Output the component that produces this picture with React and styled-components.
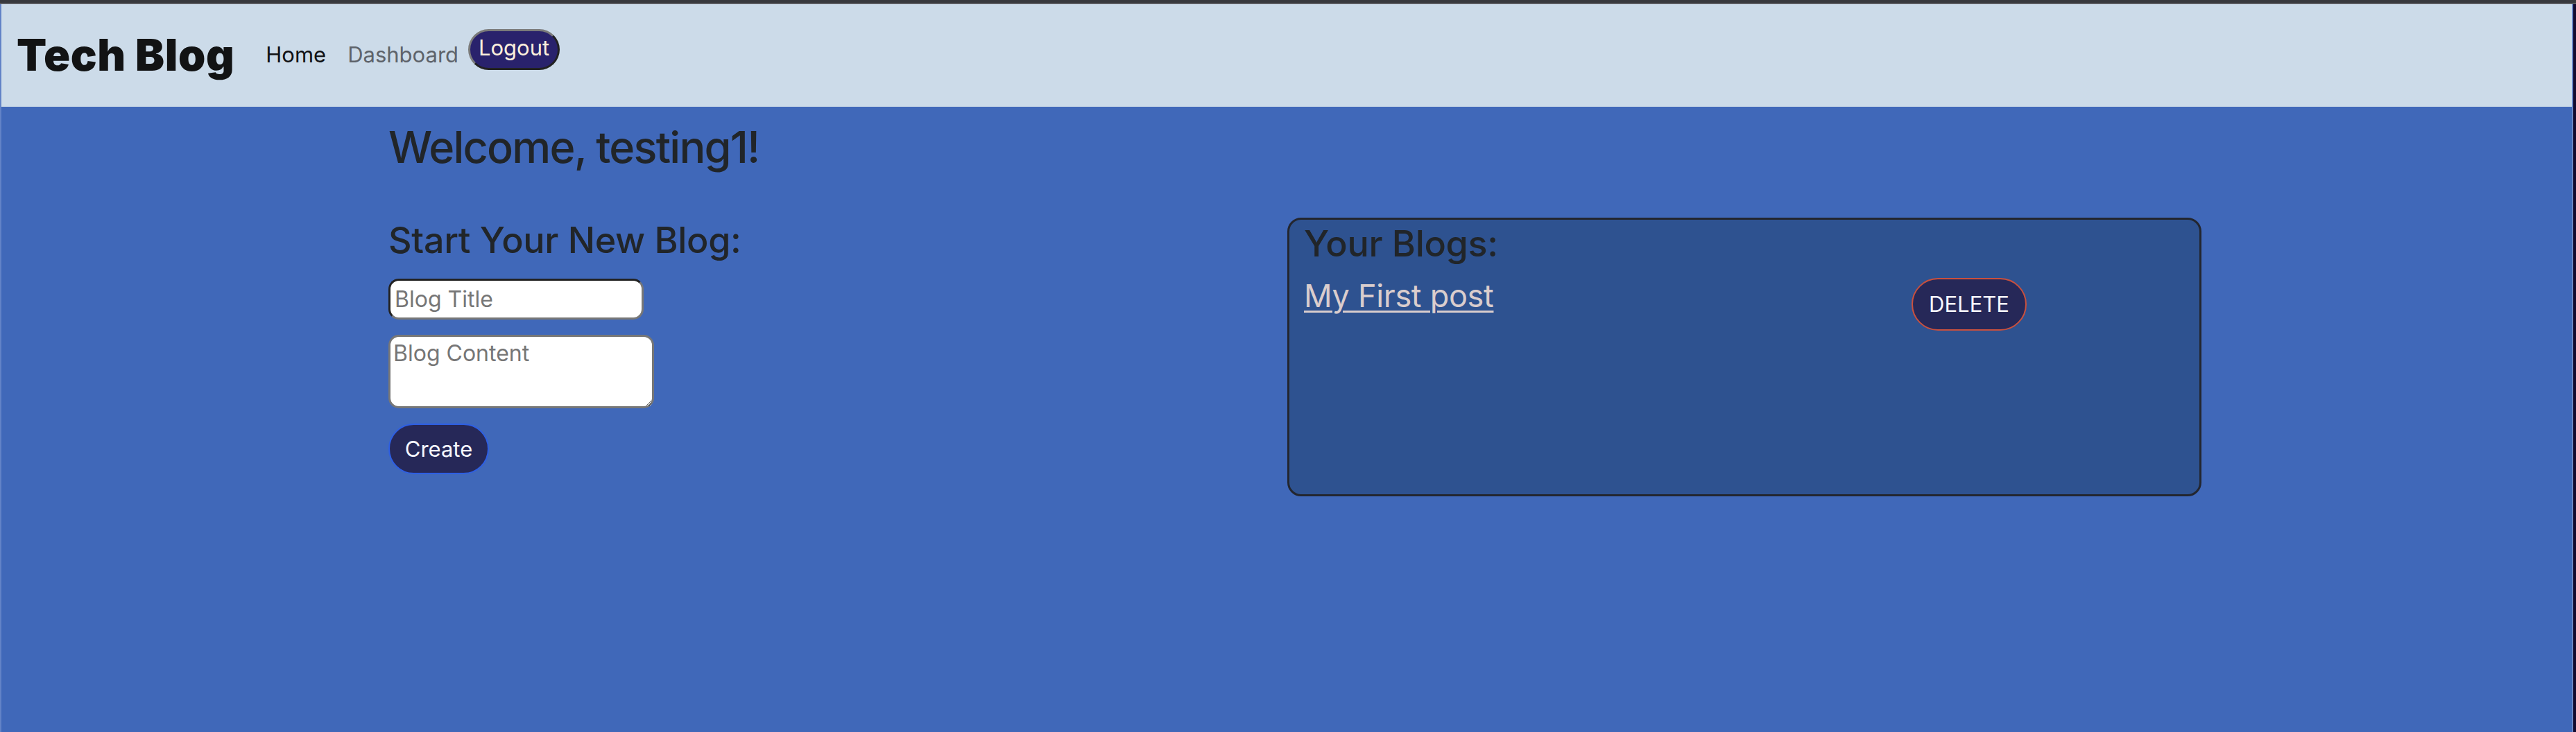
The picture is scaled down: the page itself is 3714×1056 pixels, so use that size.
import React from "react";
import styled, { createGlobalStyle } from "styled-components";

const Global = createGlobalStyle`
  html, body { margin: 0; padding: 0; }
  body {
    background: #4068b9;
    font-family: Inter, "Noto Sans", "Liberation Sans", sans-serif;
    color: #212529;
  }
  * { box-sizing: border-box; }
`;

const Window = styled.div`
  display: flex;
  flex-direction: column;
  width: 3714px;
  height: 1056px;
  overflow: hidden;
`;

const TopStrip = styled.div`
  height: 6px;
  background: #38393d;
  border-bottom: 2px solid #5b5c60;
  flex: none;
`;

const Body = styled.div`
  flex: 1;
  display: flex;
`;

const Viewport = styled.div`
  flex: 1;
  display: flex;
  flex-direction: column;
  background: #4068b9;
  border-right: 2px solid #6a86c6;
  border-left: 2px solid #6283c7;
`;

const Edge = styled.div`
  width: 4px;
  background: #120a30;
  flex: none;
`;

const Header = styled.header`
  height: 148px;
  background: #ccdbe9;
  display: flex;
  align-items: flex-start;
  padding-left: 22px;
  flex: none;
`;

const Brand = styled.div`
  font-family: Inter, "Liberation Sans", sans-serif;
  font-weight: 900;
  font-size: 63px;
  line-height: 1;
  letter-spacing: 0.6px;
  color: #121314;
  margin-top: 42px;
  margin-right: 45px;
`;

const NavLink = styled.a`
  font-size: 31px;
  line-height: 36px;
  margin-top: 55px;
  margin-right: ${(p) => p.$gap}px;
  color: ${(p) => (p.$active ? "#111214" : "#5e636a")};
  text-decoration: none;
`;

const LogoutButton = styled.button`
  margin-top: 36px;
  width: 132px;
  height: 59px;
  border-radius: 30px;
  border: 3px solid;
  border-color: #7a7a7a #222 #222 #7a7a7a;
  background: #29226c;
  color: #fcefdc;
  font-family: Inter, "Liberation Sans", sans-serif;
  font-size: 31px;
  padding: 0 0 6px;
`;

const Main = styled.main`
  flex: 1;
  padding-left: 558px;
  padding-top: 21px;
`;

const Title = styled.h1`
  margin: 0;
  font-size: 63px;
  font-weight: 500;
  line-height: 1.2;
  letter-spacing: -1.8px;
`;

const Columns = styled.div`
  display: grid;
  grid-template-columns: 1296px 1318px;
  align-items: start;
  margin-top: 65px;
`;

const Form = styled.form`
  display: flex;
  flex-direction: column;
  align-items: flex-start;
  gap: 22px;
  margin-top: 2px;
`;

const Heading = styled.h2`
  margin: 0;
  font-size: 52px;
  font-weight: 500;
  line-height: 1.2;
  letter-spacing: -0.3px;
`;

const TitleInput = styled.input`
  width: 368px;
  height: 59px;
  border-radius: 15px;
  border: 3px solid;
  border-color: #222 #777 #777 #222;
  background: #fff;
  padding: 0 6px;
  font-family: Inter, "Liberation Sans", sans-serif;
  font-size: 32px;
  &::placeholder { color: #767676; }
`;

const ContentInput = styled.textarea`
  width: 383px;
  height: 106px;
  border-radius: 15px;
  border: 3px solid #777;
  background: #fff;
  padding: 4px 4px;
  font-family: Inter, "Liberation Sans", sans-serif;
  font-size: 32px;
  line-height: 1.25;
  resize: both;
  &::placeholder { color: #767676; }
`;

const PillButton = styled.button`
  width: ${(p) => p.$w}px;
  height: ${(p) => p.$h}px;
  border-radius: 40px;
  border: 2px solid ${(p) => p.$border};
  background: #262858;
  color: #f6f7ff;
  font-family: Inter, "Liberation Sans", sans-serif;
  font-size: 31px;
  padding: 0;
`;

const Card = styled.section`
  height: 402px;
  border: 3px solid #23262f;
  border-radius: 20px;
  background: #2e5290;
  padding: 4px 21px;
  margin-top: -2px;
`;

const BlogRow = styled.div`
  display: grid;
  grid-template-columns: 876px auto;
  align-items: start;
  margin-top: 17px;
`;

const BlogLink = styled.a`
  font-size: 45px;
  line-height: 1.2;
  color: #dacdcd;
  text-decoration: underline;
  text-decoration-thickness: 3px;
  text-underline-offset: 5px;
  letter-spacing: -0.3px;
  justify-self: start;
`;

const DeleteWrap = styled.div`
  margin-top: 1px;
`;

export default function App() {
  return (
    <>
      <Global />
      <Window>
        <TopStrip />
        <Body>
          <Viewport>
            <Header>
              <Brand>Tech Blog</Brand>
              <NavLink $active $gap={31}>Home</NavLink>
              <NavLink $gap={14}>Dashboard</NavLink>
              <LogoutButton>Logout</LogoutButton>
            </Header>
            <Main>
              <Title>Welcome, testing1!</Title>
              <Columns>
                <div>
                  <Heading>Start Your New Blog:</Heading>
                  <Form onSubmit={(e) => e.preventDefault()}>
                    <div />
                    <TitleInput placeholder="Blog Title" />
                    <ContentInput placeholder="Blog Content" />
                    <PillButton $w={145} $h={73} $border="#2d5fe4">Create</PillButton>
                  </Form>
                </div>
                <Card>
                  <Heading>Your Blogs:</Heading>
                  <BlogRow>
                    <BlogLink href="#">My First post</BlogLink>
                    <DeleteWrap>
                      <PillButton $w={166} $h={76} $border="#c9503e">DELETE</PillButton>
                    </DeleteWrap>
                  </BlogRow>
                </Card>
              </Columns>
            </Main>
          </Viewport>
          <Edge />
        </Body>
      </Window>
    </>
  );
}
